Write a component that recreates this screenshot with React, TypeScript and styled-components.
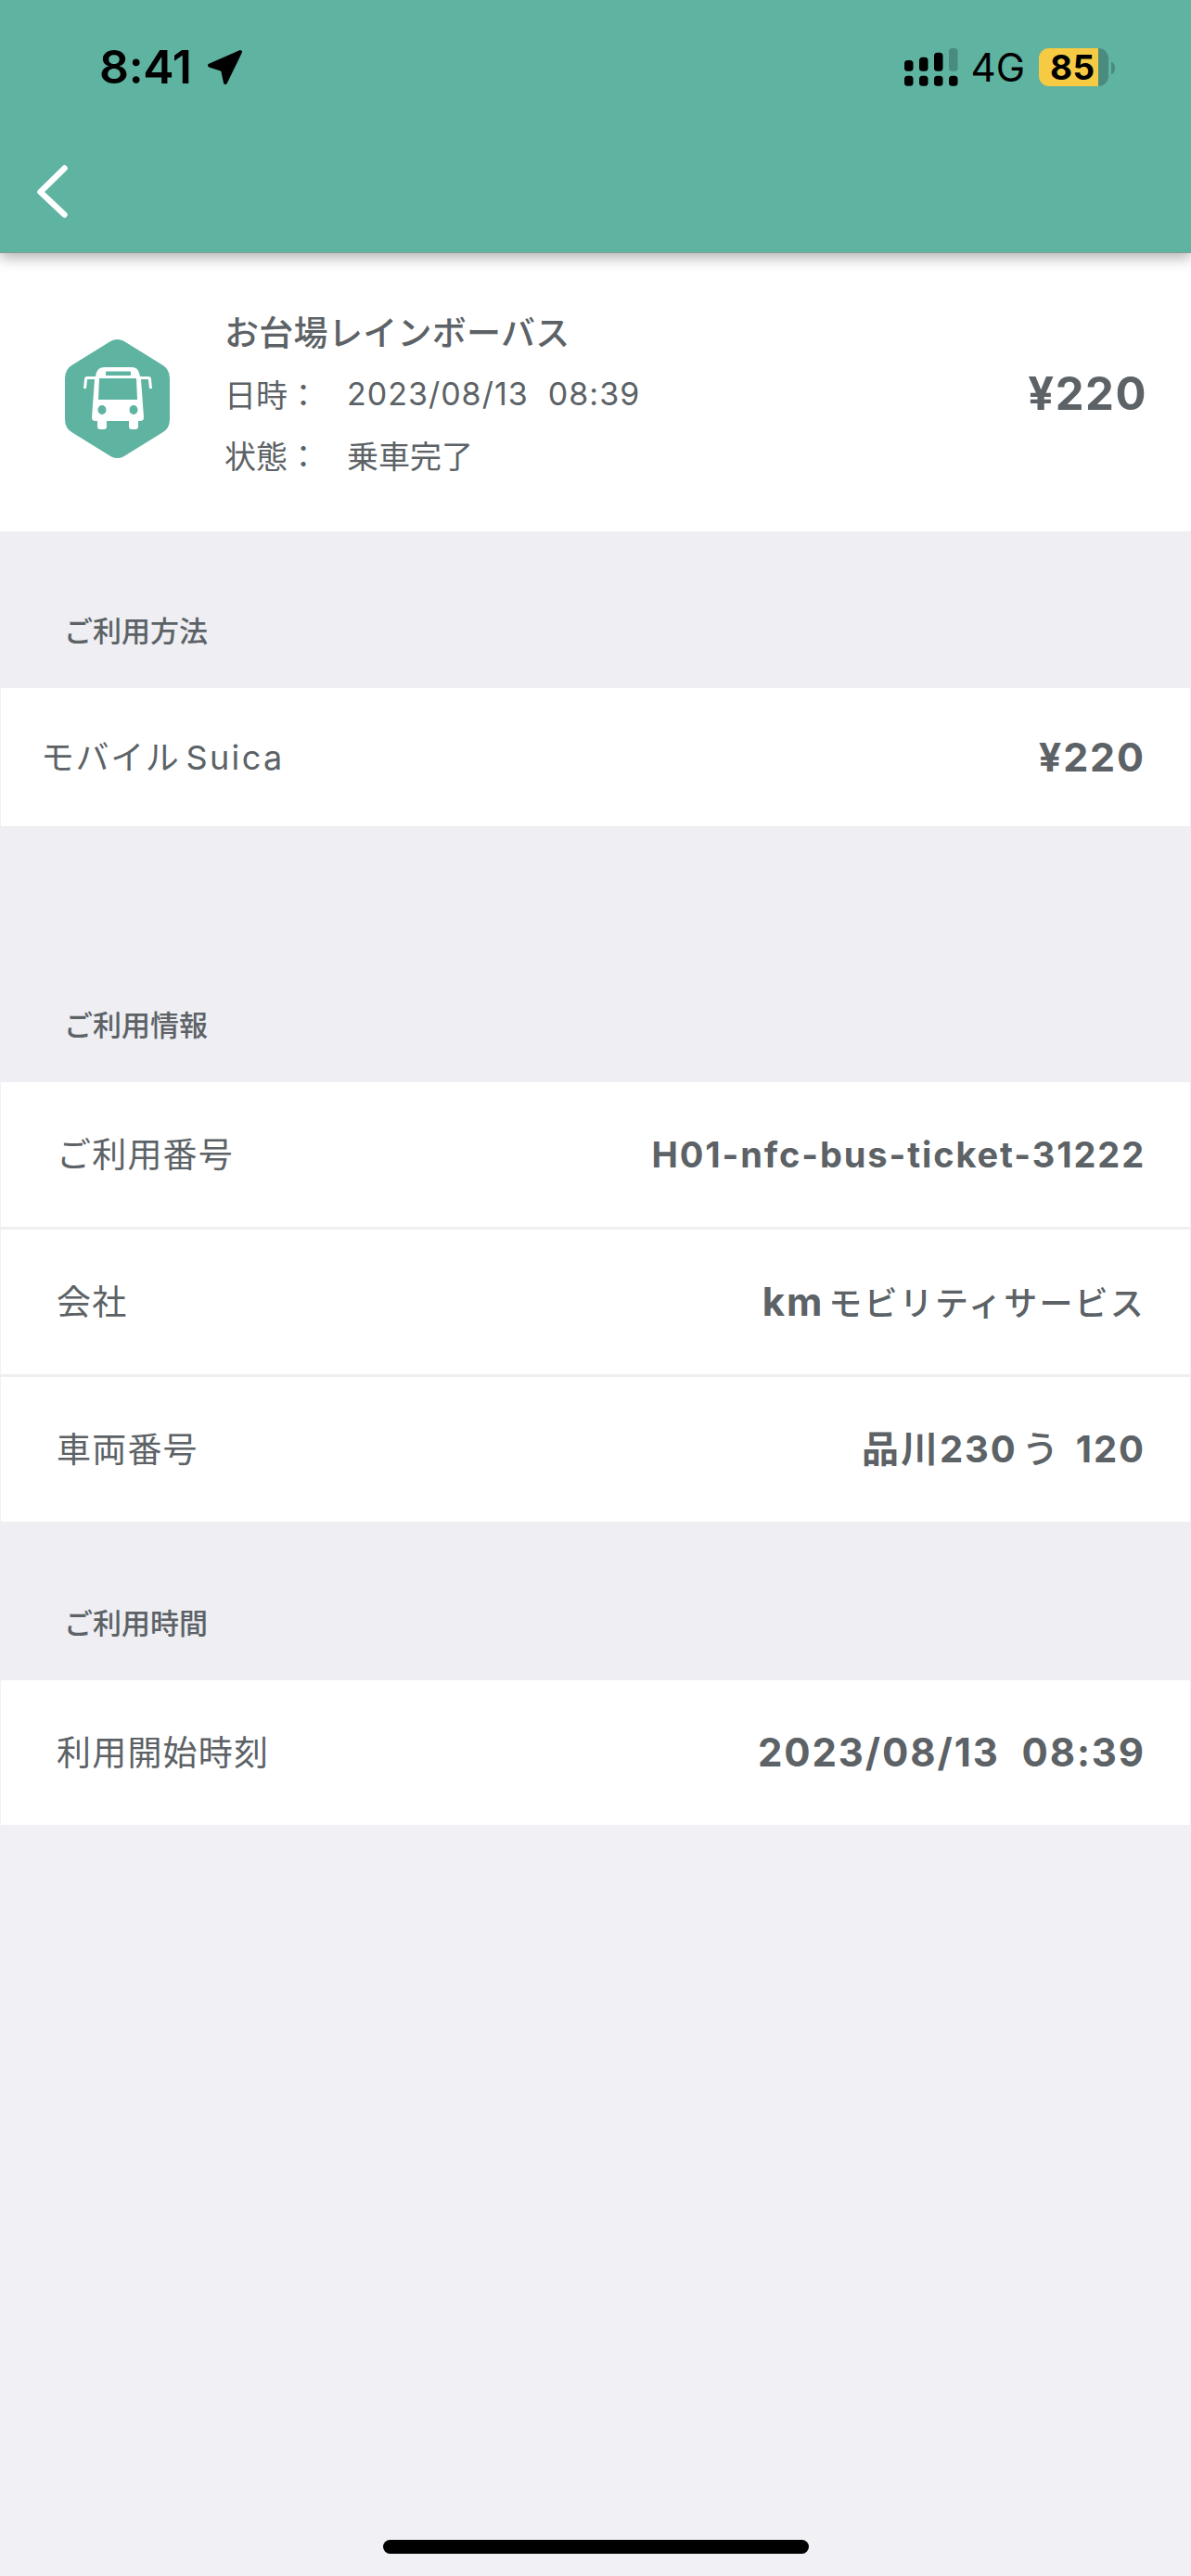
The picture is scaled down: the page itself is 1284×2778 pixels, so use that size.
import React from "react";
import styled, { createGlobalStyle } from "styled-components";

const Global = createGlobalStyle`
  html, body { margin: 0; padding: 0; background: #f1f0f5; }
  body { font-family: "Inter", "Noto Sans CJK JP", sans-serif; color: #5c6266; }
`;
const Page = styled.div`
  width: 1284px; height: 2778px; position: relative; overflow: hidden; background: #f1f0f5;
  display: flex; flex-direction: column;
`;
const Header = styled.header`
  height: 273px; flex: none; background: #5fb3a1; position: relative; z-index: 2;
  box-shadow: 0 5px 14px rgba(0,0,0,0.3);
  border-bottom: 1px solid #8b9b97; box-sizing: border-box;
  display: flex; flex-direction: column;
`;
const StatusBar = styled.div`
  height: 142px; display: flex; justify-content: space-between; padding: 46px 0 0 107px; box-sizing: border-box;
`;
const TimeWrap = styled.div`
  display: flex; align-items: flex-start; gap: 16px; color: #000;
  font-size: 50px; font-weight: 600; line-height: 52px; font-family: "Inter", sans-serif; letter-spacing: -0.3px; height: 52px;
`;
const StatusRight = styled.div`
  display: flex; align-items: flex-start; margin-right: 82px; padding-top: 6px;
`;
const NetLabel = styled.span`
  font-family: "Inter", sans-serif; font-size: 42px; line-height: 42px; color: #000; margin: 0 15px 0 14px;
`;
const Battery = styled.div`
  width: 75px; height: 41px; border-radius: 11px; box-sizing: border-box; padding-left: 12px;
  background: linear-gradient(to right, #f7ca44 64px, #498b7e 64px);
  color: #000; font: 700 37px/41px "Inter", sans-serif; letter-spacing: 0.5px; white-space: nowrap;
`;
const BackRow = styled.div`
  height: 130px; padding-left: 40px; display: flex; align-items: flex-start; padding-top: 36px; box-sizing: border-box;
`;
const Summary = styled.section`
  height: 300px; flex: none; background: #fff; display: flex; align-items: center; box-sizing: border-box;
  padding: 0 47px 0 70px; position: relative;
`;
const BadgeSlot = styled.div`
  display: flex; margin-top: 13px;
`;
const SummaryInfo = styled.div`
  margin-left: 58px; flex: 1; display: flex; flex-direction: column; padding-top: 2px;
`;
const SummaryTitle = styled.div`
  font-size: 37px; font-weight: 500; line-height: 66px; margin-bottom: 2px; letter-spacing: 0.3px;
  font-family: "Noto Sans CJK JP", sans-serif; color: #5c6266;
`;
const MetaRow = styled.div`
  display: flex; font-size: 34px; line-height: 66px; font-family: "Inter", "Noto Sans CJK JP", sans-serif; font-weight: 400; color: #5c6266;
`;
const MetaLabel = styled.span`
  width: 132px; flex: none; font-family: "Noto Sans CJK JP", sans-serif; font-weight: 400;
`;
const MetaValue = styled.span<{ $cjk?: boolean }>`
  white-space: pre; letter-spacing: ${p => (p.$cjk ? "0" : "1px")};
  font-family: ${p => (p.$cjk ? `"Noto Sans CJK JP", sans-serif` : `"Inter", sans-serif`)};
`;
const Price = styled.div`
  font: 700 49px/1 "Inter", "Noto Sans CJK JP", sans-serif; letter-spacing: 1.5px; color: #5c6266; margin-top: 3px;
`;
const SectionTitle = styled.h2<{ $h: number }>`
  margin: 0; height: ${p => p.$h}px; flex: none; background: #eeeef3; box-sizing: border-box;
  font: 500 31px/1 "Noto Sans CJK JP", sans-serif; color: #5c6266;
  padding-left: 69px; display: flex; align-items: flex-end; padding-bottom: 48px;
`;
const Spacer = styled.div<{ $h: number }>`
  height: ${p => p.$h}px; flex: none; background: #eeeef3;
`;
const Row = styled.div<{ $pad: number; $h: number }>`
  height: ${p => p.$h}px; flex: none; background: #fff; display: flex; align-items: center; justify-content: space-between;
  padding: 0 48px 0 ${p => p.$pad}px; box-sizing: border-box; margin: 0 1px;
`;
const Divider = styled.div`
  height: 3px; flex: none; background: #efefef;
`;
const RowLabel = styled.span<{ $compact?: boolean }>`
  font: 400 ${p => (p.$compact ? 36 : 37)}px/1 "Inter", "Noto Sans CJK JP", sans-serif;
  letter-spacing: ${p => (p.$compact ? 1.6 : 1.2)}px; color: #5c6266;
`;
const LatinPart = styled.span`
  margin-left: 6px; letter-spacing: 2.4px;
`;
const RowValue = styled.span<{ $size?: number }>`
  font: 700 ${p => p.$size ?? 38}px/1 "Inter", "Noto Sans CJK JP", sans-serif; letter-spacing: 1.9px; color: #5c6266; white-space: pre;
`;
const KanaValue = styled.span`
  font-weight: 500; font-size: 36px; letter-spacing: 2.2px; margin-left: 5px;
`;
const Hiragana = styled.span`
  font-weight: 500; margin: 0 5px;
`;
const Home = styled.div`
  position: absolute; left: 413px; top: 2739px; width: 459px; height: 15px; border-radius: 7.5px; background: #000;
`;

const Arrow = () => (
  <svg width="40" height="40" viewBox="0 0 40 40" style={{ marginTop: 7 }}>
    <path fill="#000" stroke="#000" strokeWidth="4" strokeLinejoin="round" d="M36 3 3 17.5 17 22 20 36z" />
  </svg>
);
const Signal = () => (
  <svg width="58" height="41" viewBox="0 0 58 41" fill="#000">
    <rect x="0" y="13" width="9.5" height="11.7" rx="3.5" />
    <rect x="16" y="9.7" width="9.5" height="15" rx="3.5" />
    <rect x="32" y="4.7" width="9.5" height="20" rx="3.5" />
    <rect x="48" y="0" width="9.5" height="24.7" rx="3.5" fill="#498b7e" />
    <rect x="0" y="29.7" width="9.5" height="11" rx="3.5" />
    <rect x="16" y="29.7" width="9.5" height="11" rx="3.5" />
    <rect x="32" y="29.7" width="9.5" height="11" rx="3.5" />
    <rect x="48" y="29.7" width="9.5" height="11" rx="3.5" />
  </svg>
);
const BatteryNub = () => (
  <svg width="4" height="13" viewBox="0 0 4 13" style={{ marginTop: 15, marginLeft: 3 }}>
    <path fill="#498b7e" d="M0 0c2.5 0 4 3 4 6.500s-1.500 6.500-4 6.500z" />
  </svg>
);
const Back = () => (
  <svg width="34" height="57" viewBox="0 0 34 57">
    <path d="M29.500 3.500 3.500 29 29.500 53.500" fill="none" stroke="#fff" strokeWidth="6.500" strokeLinecap="round" strokeLinejoin="round" />
  </svg>
);
const BusBadge = () => (
  <svg width="114" height="128" viewBox="0 0 114 128">
    <path fill="#5fb3a1" d="M50 1.500Q56.500-1.500 63 1.500L105 27.400Q113 32 113 42V86Q113 96 105 100.600L63 126.500Q56.500 129.500 50 126.500L8 100.600Q0 96 0 86V42Q0 32 8 27.400Z" />
    <path fill="#fff" fillRule="evenodd" d="M43 30H72C78 30 80 34 81 40H90C92 40 93 41 93 43L94 53H91L90 44C90 43.500 89.500 43 89 43H82L85 84C85 86.500 84 88 81 88H79V94C79 96 78 97 76 97H72C70 97 69 96 69 94V88H45V94C45 96 44 97 42 97H38C36 97 35 96 35 94V88H33C30 88 29 86.500 29 84L32 43H25C24.500 43 24 43.500 24 44L23 53H20L21 43C21 41 22 40 24 40H33C34 34 36 30 43 30ZM45 34.500C44.400 34.500 44 35 44 35.500V38C44 38.500 44.400 39 45 39H70C70.600 39 71 38.500 71 38V35.500C71 35 70.600 34.500 70 34.500ZM37 42 36 65H78L77 42ZM40 71A4.500 5 0 1 0 40.010 81 4.500 5 0 1 0 40 71ZM74 71A4.500 5 0 1 0 74.010 81 4.500 5 0 1 0 74 71Z" />
  </svg>
);

export default function App() {
  return (
    <Page>
      <Global />
      <Header>
        <StatusBar>
          <TimeWrap>8:41<Arrow /></TimeWrap>
          <StatusRight>
            <Signal />
            <NetLabel>4G</NetLabel>
            <Battery>85</Battery>
            <BatteryNub />
          </StatusRight>
        </StatusBar>
        <BackRow><Back /></BackRow>
      </Header>
      <Summary>
        <BadgeSlot><BusBadge /></BadgeSlot>
        <SummaryInfo>
          <SummaryTitle>お台場レインボーバス</SummaryTitle>
          <MetaRow><MetaLabel>日時：</MetaLabel><MetaValue>2023/08/13  08:39</MetaValue></MetaRow>
          <MetaRow><MetaLabel>状態：</MetaLabel><MetaValue $cjk>乗車完了</MetaValue></MetaRow>
        </SummaryInfo>
        <Price>¥220</Price>
      </Summary>
      <SectionTitle $h={169}>ご利用方法</SectionTitle>
      <Row $pad={43} $h={149}>
        <RowLabel $compact>モバイル<LatinPart>Suica</LatinPart></RowLabel>
        <RowValue $size={43}>¥220</RowValue>
      </Row>
      <Spacer $h={107} />
      <SectionTitle $h={169}>ご利用情報</SectionTitle>
      <Row $pad={60} $h={156}>
        <RowLabel>ご利用番号</RowLabel>
        <RowValue>H01-nfc-bus-ticket-31222</RowValue>
      </Row>
      <Divider />
      <Row $pad={60} $h={156}>
        <RowLabel>会社</RowLabel>
        <RowValue $size={42}>km<KanaValue>モビリティサービス</KanaValue></RowValue>
      </Row>
      <Divider />
      <Row $pad={60} $h={156}>
        <RowLabel>車両番号</RowLabel>
        <RowValue $size={40}>品川230<Hiragana>う</Hiragana> 120</RowValue>
      </Row>
      <SectionTitle $h={171}>ご利用時間</SectionTitle>
      <Row $pad={60} $h={156}>
        <RowLabel>利用開始時刻</RowLabel>
        <RowValue $size={42}>2023/08/13  08:39</RowValue>
      </Row>
      <Home />
    </Page>
  );
}
